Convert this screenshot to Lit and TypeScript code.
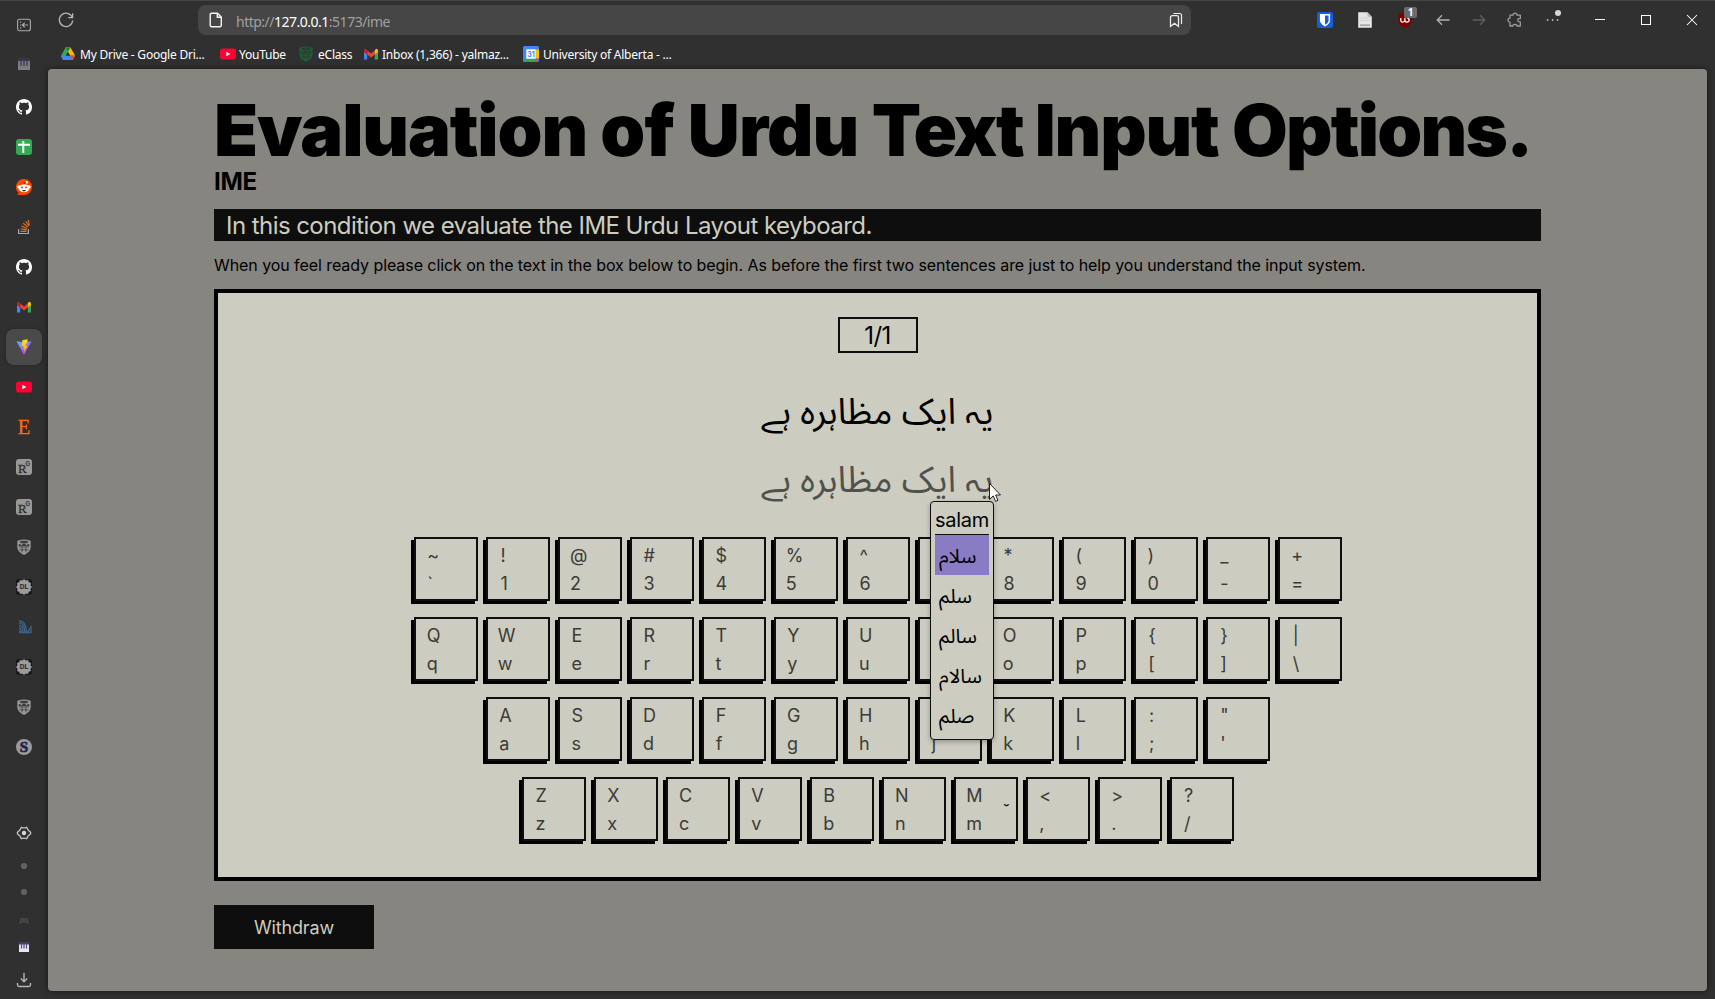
import { LitElement, html, svg, css, TemplateResult } from "lit";
import { customElement, property } from "lit/decorators.js";
import { classMap } from "lit/directives/class-map.js";

const shieldUni = (c: string, bg: string) => svg`
  <path d="M1.3 1.8Q8 -1 14.7 1.8V8.5Q14 13.500 8 16Q2 13.500 1.300 8.500Z" fill=${c}/>
  <path d="M4.500 2.200h7v1.500h-7zM3 5.300l2.500 1.200 2.500-2 2.500 2 2.500-1.200v1.400H3zM3 8h10M3.500 10.800h9M6 8v5.500M10 8v5.500" fill=${bg} stroke=${bg} stroke-width=".7"/>`;

const piano = svg`
  <rect x="3" y="3" width="10" height="10" fill="#e8e4f4"/><rect x="3" y="3" width="10" height="2.500" fill="#4a3f66"/>
  <path d="M5.500 5v4.500M8 5v4.500M10.500 5v4.500" stroke="#5d508c" stroke-width="1.300"/>`;

const gmail = svg`
  <path d="M1 5v8.500h3.200V7.600z" fill="#4285f4"/><path d="M15 5v8.500h-3.200V7.600z" fill="#34a853"/>
  <path d="M4.200 4.500L8 7.500l3.800-3v4L8 11.500l-3.800-3z" fill="#ea4335"/>
  <path d="M1 4.500Q1 2.700 2.700 2.700L4.200 4v4.500L1 6.200z" fill="#c5221f"/><path d="M15 4.500q0-1.800-1.700-1.800L11.800 4v4.500L15 6.200z" fill="#fbbc04"/>`;

const youtube = svg`<rect x="0" y="2.500" width="16" height="11" rx="2.800" fill="#ff0033"/><path d="M6.300 5.700v4.600L10.400 8z" fill="#fff"/>`;

const scholarDL = svg`
  <rect width="16" height="16" rx="3" fill="#181818"/>
  <path d="M8 0l1.800 1.500L12 1l.8 2.200L15 4l-.5 2.200L16 8l-1.500 1.800L15 12l-2.200.8L12 15l-2.200-.5L8 16l-1.800-1.500L4 15l-.8-2.200L1 12l.5-2.200L0 8l1.500-1.800L1 4l2.200-.8L4 1l2.200.5z" fill="#9c9c9c"/>
  <text x="8" y="10.300" text-anchor="middle" font-family="Inter,sans-serif" font-weight="800" font-size="6.600" fill="#333">DL</text>`;

const rg = svg`
  <rect width="16" height="16" rx="3" fill="#989898"/>
  <text x="2" y="14" font-family="Liberation Serif,serif" font-size="13" fill="#2d2d2d" stroke="#2d2d2d" stroke-width=".3">R</text>
  <text x="9.300" y="7" font-family="Inter,sans-serif" font-size="6.500" font-weight="600" fill="#333">G</text>`;

const icons: Record<string, TemplateResult<2>> = {
  panel: svg`<rect x="1.600" y="2.200" width="12.800" height="11.600" rx="2" fill="none" stroke="#aaa" stroke-width="1.100"/><path d="M4.600 4.500v1.200M4.600 7.400v1.200M4.600 10.300v1.200M12 8H6.500M8.700 5.700L6.400 8l2.300 2.300" fill="none" stroke="#aaa" stroke-width="1.200"/>`,
  pianoDim: svg`<g transform="translate(-1.600 -1.600) scale(1.200)" opacity=".42">${piano}</g>`,
  piano,
  github: svg`<path fill="#fff" d="M8 0C3.58 0 0 3.58 0 8c0 3.54 2.29 6.53 5.47 7.59.4.07.55-.17.55-.38 0-.19-.01-.82-.01-1.49-2.01.37-2.53-.49-2.69-.94-.09-.23-.48-.94-.82-1.13-.28-.15-.68-.52-.01-.53.63-.01 1.08.58 1.23.82.72 1.21 1.87.87 2.33.66.07-.52.28-.87.51-1.07-1.78-.2-3.64-.89-3.64-3.95 0-.87.31-1.59.82-2.15-.08-.2-.36-1.02.08-2.12 0 0 .67-.21 2.2.82.64-.18 1.32-.27 2-.27s1.36.09 2 .27c1.53-1.04 2.2-.82 2.2-.82.44 1.1.16 1.92.08 2.12.51.56.82 1.27.82 2.15 0 3.07-1.87 3.75-3.65 3.95.29.25.54.73.54 1.48 0 1.07-.01 1.93-.01 2.2 0 .21.15.46.55.38A8.01 8.01 0 0 0 16 8c0-4.42-3.58-8-8-8z"/>`,
  sheets: svg`<rect width="16" height="16" rx="3" fill="#34a853"/><path d="M2 5.700h12M7.300 2v12" stroke="#fff" stroke-width="1.900"/>`,
  reddit: svg`<path d="M8 0a8 8 0 1 1 0 16H1.200l1.500-2A8 8 0 0 1 8 0z" fill="#ff4500"/><ellipse cx="8" cy="9.200" rx="5.300" ry="4" fill="#fff"/><circle cx="2.900" cy="7.800" r="1.600" fill="#fff"/><circle cx="13.100" cy="7.800" r="1.600" fill="#fff"/><circle cx="10.600" cy="3.300" r="1.300" fill="#fff"/><path d="M8 5.500q0-2 2-2.200" fill="none" stroke="#222" stroke-width=".7"/><circle cx="6" cy="8.500" r="1.100" fill="#ff4500"/><circle cx="10" cy="8.500" r="1.100" fill="#ff4500"/><path d="M6 11h4q-.8 1.400-2 1.400T6 11z" fill="#222"/>`,
  stack: svg`<path d="M2.600 10v4.500h9.800V10" fill="none" stroke="#a8a8a8" stroke-width="1.200"/><path d="M4.500 12.300h6M4.700 9.700l5.900 1.200M5.500 6.900l5.400 2.500M7.200 4.300l4.600 3.800M9.700 2.200l3.300 4.900M12.300 1l.9 5" stroke="#e8701f" stroke-width="1.150"/>`,
  gmail,
  vite: svg`<defs><linearGradient id="va" x1="0" y1="0" x2=".6" y2="1"><stop offset="0" stop-color="#54c3fa"/><stop offset="1" stop-color="#bd34fe"/></linearGradient><linearGradient id="vb" x1="0" y1="0" x2="0" y2="1"><stop offset="0" stop-color="#ffdd35"/><stop offset="1" stop-color="#ffa800"/></linearGradient></defs><path d="M.6 2.300L8 16l7.500-13.700L8 3.600z" fill="url(#va)"/><path d="M11.500.2L6.300 1.200 5.900 7.500l2-.4-.6 3 1.300-.4-1 4.300 3.900-7.300-2.100.4.9-2.900 1.200-.2z" fill="url(#vb)"/>`,
  youtube,
  etsy: svg`<text x="8" y="15.200" text-anchor="middle" font-family="Liberation Serif,serif" font-size="20.500" fill="#f56d13" stroke="#f56d13" stroke-width=".3">E</text>`,
  rg,
  shield: shieldUni("#999", "#333"),
  waves: svg`<path d="M3 1.800q7 0 7.500 11.700M3 4q5.500 0 5.800 9.500M3 6.500q3.800.3 4.300 7M3 9q2 .5 2.800 4.500M3 11.500l1.300 2M10 11l1.500 2.500 3.500-5.500v5.500H3" fill="none" stroke="#3c6288" stroke-width="1.300"/>`,
  dl: scholarDL,
  sLogo: svg`<circle cx="8" cy="8" r="8" fill="#9b9b9b"/><text x="8" y="13.300" text-anchor="middle" font-family="Liberation Serif,serif" font-weight="700" font-size="15" fill="#1e2553" stroke="#1e2553" stroke-width=".7">S</text>`,
  gear: svg`<path d="M5.300 2.300Q8 3.600 10.700 2.300L12 4.900 14.600 7.200V8.800L12 11.100 10.700 13.700Q8 12.400 5.300 13.700L4 11.100 1.400 8.800V7.200L4 4.900z" fill="none" stroke="#c4c4c4" stroke-width="1.300" stroke-linejoin="round"/><circle cx="8" cy="8" r="2.200" fill="#d8d8d8"/>`,
  dot: svg`<circle cx="8" cy="8" r="3.100" fill="#616161"/>`,
  pad: svg`<path d="M4.500 5h7l1.300 5.500-1.500.8L10 9.500H6L4.700 11.300 3.200 10.500z" fill="#484848"/><path d="M5.500 6.500v2M10 6.200v2.400" stroke="#333"/>`,
  download: svg`<path d="M8 1v8.500M4.800 6.500L8 9.700l3.200-3.200M1.500 11v1.800q0 1.700 1.700 1.700h9.600q1.700 0 1.700-1.700V11" fill="none" stroke="#b4b4b4" stroke-width="1.400"/>`,
  drive: svg`<path d="M5.600 1.500h4.800L5.700 9.700 3.200 14 .8 9.900z" fill="#34a853"/><path d="M5.600 1.500h4.800l4.800 8.300h-4.900z" fill="#fbbc04"/><path d="M5.600 1.500h4.800L8 5.700z" fill="#188038"/><path d="M3.300 9.800h12L12.900 14H3.200L.8 9.900z" fill="#4285f4"/><path d="M10.300 9.800h5L12.900 14z" fill="#ea4335"/>`,
  eclass: shieldUni("#1d5c37", "#303a33"),
  calendar: svg`<rect width="16" height="16" rx="1.500" fill="#4285f4"/><path d="M12.500 3.500H16v9h-3.500z" fill="#fbbc04"/><path d="M0 12.700h12.500V16H1.500Q0 16 0 14.500z" fill="#34a853"/><path d="M12.500 12.700H16L12.500 16z" fill="#ea4335"/><rect x="3.300" y="3.300" width="9.400" height="9.400" fill="#fff"/><text x="7.900" y="10.600" text-anchor="middle" font-family="Inter,sans-serif" font-weight="700" font-size="7" fill="#4285f4">31</text>`,
  reload: svg`<path d="M14.200 5.300A6.700 6.700 0 1 0 14.700 8.500" fill="none" stroke="#b5b5b5" stroke-width="1.300"/><path d="M14.600 1.300v4.300h-4.300" fill="none" stroke="#b5b5b5" stroke-width="1.300"/>`,
  page: svg`<path d="M3.700 1.200h5.800l3.800 3.800v8.300q0 1.500-1.500 1.500H3.700q-1.500 0-1.500-1.500V2.700q0-1.500 1.500-1.500zM9.300 1.300v4h4" fill="none" stroke="#f4f4f4" stroke-width="1.400"/>`,
  bookmark: svg`<path d="M2.500 14.500V5.500q0-1.800 1.800-1.800h4.400q1.800 0 1.800 1.800v9l-4-3.200z" fill="none" stroke="#eee" stroke-width="1.300"/><path d="M5.500 1.500h6q2 0 2 2v8.500" fill="none" stroke="#eee" stroke-width="1.200"/>`,
  bitwarden: svg`<rect width="16" height="16" rx="1.800" fill="#175ddc"/><path d="M2.900 2h10.200v6.300q0 3.600-5.100 6.200-5.100-2.600-5.100-6.200z" fill="#fff"/><path d="M8 3.600v9.100q3.600-2 3.600-4.500V3.600z" fill="#175ddc"/>`,
  doc: svg`<path d="M1.200.3h9.300l4.300 4.500v11H1.200z" fill="#e6e6e4"/><path d="M10.500.3v4.500h4.300z" fill="#b5b5b5"/><path d="M3 6h9.500M3 8.300h9.500" stroke="#cfcfcf"/><path d="M3 13.200h10" stroke="#a8a8a8" stroke-width="1.800"/>`,
  ublock: svg`<path d="M8 0q3 2 6.800 2v6Q14.500 13.500 8 16 1.500 13.500 1.200 8V2Q5 2 8 0z" fill="#800000"/><path d="M3.800 6v2.500q0 1.600 1.900 1.600T7.900 8.500V6M7.900 8.500q0 1.600 2.100 1.600t2.100-2.100-2-2.200" fill="none" stroke="#fff" stroke-width="1.300"/>`,
  back: svg`<path d="M14.500 8H2.200M7 3.200L2.200 8 7 12.800" fill="none" stroke="#b0b0b0" stroke-width="1.300"/>`,
  forward: svg`<path d="M1.500 8h12.300M9 3.200L13.800 8 9 12.800" fill="none" stroke="#5f5f5f" stroke-width="1.300"/>`,
  puzzle: svg`<path d="M6 3.200a2 2 0 0 1 4 0h3.300v3.300q-2.500-.2-2.500 1.700t2.500 1.700V14H10q0-1.600-2-1.600T6 14H3v-3.800a2 2 0 0 1 0-4V3.200z" fill="none" stroke="#9d9d9d" stroke-width="1.300" stroke-linejoin="round"/>`,
  more: svg`<circle cx="2.600" cy="8" r=".9" fill="#bbb"/><circle cx="7.600" cy="8" r=".9" fill="#bbb"/><circle cx="12.600" cy="8" r=".9" fill="#bbb"/>`,
  min: svg`<path d="M3 7.500h10" stroke="#fff"/>`,
  max: svg`<rect x="3.500" y="3.500" width="9" height="9" fill="none" stroke="#fff"/>`,
  close: svg`<path d="M3 3l10 10M13 3L3 13" stroke="#fff" stroke-width="1.050"/>`,
};

@customElement("ui-icon")
class UiIcon extends LitElement {
  @property() name = "dot";
  static styles = css`
    :host { display: block; width: 16px; height: 16px; flex: none; }
    svg { display: block; width: 100%; height: 100%; overflow: visible; }
  `;
  render() {
    return html`<svg viewBox="0 0 16 16">${icons[this.name]}</svg>`;
  }
}

const tabs = ["github", "sheets", "reddit", "stack", "github", "gmail", "vite", "youtube", "etsy", "rg", "rg", "shield", "dl", "waves", "dl", "shield", "sLogo"];

@customElement("side-bar")
class SideBar extends LitElement {
  static styles = css`
    :host { display: flex; flex-direction: column; align-items: center; width: 48px; height: 999px; flex: none; }
    .slot { display: grid; place-items: center; width: 36px; height: 36px; margin: 2px 0; border-radius: 8px; flex: none; }
    .top { margin-top: 7px; }
    .second { margin-top: 1px; margin-bottom: 5px; }
    .active { background: #4a4a4a; box-shadow: 0 0 3px #0004; }
    .spacer { flex: 1; }
    .small { height: 26px; width: 26px; display: grid; place-items: center; }
    .gear { height: 40px; }
    .pad { padding-top: 3px; }
    .down { height: 39px; }
  `;
  render() {
    return html`
      <div class="slot top"><ui-icon name="panel"></ui-icon></div>
      <div class="slot second"><ui-icon name="pianoDim"></ui-icon></div>
      ${tabs.map((n) => html`<div class=${classMap({ slot: true, active: n === "vite" })}><ui-icon name=${n}></ui-icon></div>`)}
      <div class="spacer"></div>
      <div class="small gear"><ui-icon name="gear"></ui-icon></div>
      <div class="small"><ui-icon name="dot"></ui-icon></div>
      <div class="small"><ui-icon name="dot"></ui-icon></div>
      <div class="small pad"><ui-icon name="pad"></ui-icon></div>
      <div class="small"><ui-icon name="piano"></ui-icon></div>
      <div class="small down"><ui-icon name="download"></ui-icon></div>
    `;
  }
}

@customElement("browser-bar")
class BrowserBar extends LitElement {
  static styles = css`
    :host { display: block; height: 69px; font-family: "Noto Sans", "Open Sans", sans-serif; color: #fff; }
    .nav { display: flex; align-items: center; height: 30px; padding-top: 5px; }
    .reload { margin-left: 10px; margin-right: 124px; }
    .url { display: flex; align-items: center; width: 993px; height: 30px; box-sizing: border-box; background: #464646; border-radius: 8px; padding: 0 7px 0 10px; font-size: 14px; color: #a0a0a0; }
    .addr { flex: 1; margin-left: 12px; padding-top: 2px; letter-spacing: -0.5px; white-space: pre; }
    .addr b { font-weight: 400; color: #fff; }
    .tools { display: flex; margin-left: auto; }
    .tool { display: grid; place-items: center; width: 36px; height: 30px; position: relative; }
    .wide { width: 40px; }
    .win { width: 46px; }
    .first-win { margin-left: 4px; }
    .badge { position: absolute; right: 8px; top: 2px; width: 13px; height: 11px; border-radius: 2px; background: #6b6b6b; font: 700 10px/11px "Noto Sans", sans-serif; text-align: center; }
    .notice { position: absolute; right: 12px; top: 5px; width: 6px; height: 6px; border-radius: 50%; background: #d6d6d6; }
    .marks { display: flex; align-items: center; height: 30px; padding: 4px 0 0 12px; font-size: 12px; }
    .mark { display: flex; align-items: center; gap: 4px; white-space: nowrap; flex: none; }
    .label { padding-top: 1px; letter-spacing: -0.23px; }
    .m0 { width: 160px; } .m1 { width: 78px; } .m2 { width: 65px; } .m3 { width: 160px; }
    .m1, .m3 { gap: 3px; }
  `;
  render() {
    const marks = [["drive", "My Drive - Google Dri..."], ["youtube", "YouTube"], ["eclass", "eClass"], ["gmail", "Inbox (1,366) - yalmaz..."], ["calendar", "University of Alberta - ..."]];
    return html`
      <div class="nav">
        <ui-icon class="reload" name="reload"></ui-icon>
        <div class="url"><ui-icon name="page"></ui-icon><span class="addr">http://<b>127.0.0.1</b>:5173/ime</span><ui-icon name="bookmark"></ui-icon></div>
        <div class="tools">
          <div class="tool wide"><ui-icon name="bitwarden"></ui-icon></div>
          <div class="tool wide"><ui-icon name="doc"></ui-icon></div>
          <div class="tool wide"><ui-icon name="ublock"></ui-icon><span class="badge">1</span></div>
          <div class="tool"><ui-icon name="back"></ui-icon></div>
          <div class="tool"><ui-icon name="forward"></ui-icon></div>
          <div class="tool"><ui-icon name="puzzle"></ui-icon></div>
          <div class="tool wide"><ui-icon name="more"></ui-icon><span class="notice"></span></div>
          <div class="tool win first-win"><ui-icon name="min"></ui-icon></div>
          <div class="tool win"><ui-icon name="max"></ui-icon></div>
          <div class="tool win"><ui-icon name="close"></ui-icon></div>
        </div>
      </div>
      <div class="marks">
        ${marks.map(([i, t], n) => html`<div class="mark m${n}"><ui-icon name=${i}></ui-icon><span class="label">${t}</span></div>`)}
      </div>
    `;
  }
}

const rows: string[][] = [
  ["~`", "!1", "@2", "#3", "$4", "%5", "^6", "&7", "*8", "(9", ")0", "_-", "+="],
  ["Qq", "Ww", "Ee", "Rr", "Tt", "Yy", "Uu", "Ii", "Oo", "Pp", "{[", "}]", "|\\"],
  ["Aa", "Ss", "Dd", "Ff", "Gg", "Hh", "Jj", "Kk", "Ll", ":;", "\"'"],
  ["Zz", "Xx", "Cc", "Vv", "Bb", "Nn", "Mm", "<,", ">.", "?/"],
];

@customElement("key-board")
class KeyBoard extends LitElement {
  static styles = css`
    :host { display: flex; flex-direction: column; gap: 16px; align-items: center; }
    .row { display: flex; gap: 8px; }
    .key { display: flex; justify-content: space-around; align-items: center; box-sizing: border-box; width: 64px; height: 64px; padding-top: 2px; border: 2px solid #0e0e0e; box-shadow: -3px 3px 0 #000; background: #cdccc0; font-size: 18px; line-height: 28px; color: #3b3b37; letter-spacing: -0.15px; }
    .sym { display: flex; flex-direction: column; }
    .alt { width: 1px; height: 56px; display: flex; justify-content: center; font-weight: 800; font-size: 14px; line-height: 56px; color: #111; }
    .alt span { padding-left: 4px; }
  `;
  render() {
    return html`${rows.map((r) => html`<div class="row">${r.map((k) => html`
      <div class="key"><div class="sym"><span>${k[0]}</span><span>${k[1]}</span></div><div class="alt">${k === "Mm" ? html`<span>˘</span>` : ""}</div></div>`)}</div>`)}`;
  }
}

@customElement("ime-menu")
class ImeMenu extends LitElement {
  static styles = css`
    :host { display: block; box-sizing: border-box; width: 64px; height: 239px; padding: 4px; border: 1px solid #0e0e0e; border-radius: 4px; background: #cdccc0; box-shadow: 0 2px 5px #0004; color: #000; }
    .typed { font-size: 20px; line-height: 28px; height: 28px; border-bottom: 1px solid #0e0e0e; white-space: nowrap; letter-spacing: -0.3px; }
    .option { height: 40px; line-height: 44px; padding: 0 4px; font-family: "Noto Sans Arabic", "DejaVu Sans", sans-serif; font-size: 20px; white-space: nowrap; }
    .selected { background: #8a7cc4; }
  `;
  render() {
    const options = ["سلام", "سلم", "سالم", "سالام", "صلم"];
    return html`<div class="typed">salam</div>
      ${options.map((o, i) => html`<div class=${classMap({ option: true, selected: i === 0 })}>${o}</div>`)}`;
  }
}

@customElement("app-root")
class AppRoot extends LitElement {
  static styles = css`
    :host { display: flex; width: 1715px; height: 999px; box-sizing: border-box; background: #303030; overflow: hidden; font-family: Inter, sans-serif; color: #000; box-shadow: inset 0 1px 0 #454545; }
    .main { flex: 1; min-width: 0; display: flex; flex-direction: column; }
    .view { height: 922px; width: 1659px; box-sizing: border-box; background: #868580; border-radius: 4px; padding: 25px 166px 0; box-shadow: 0 0 6px #0008; }
    h1 { margin: 0; font-size: 72px; line-height: 72px; font-weight: 900; white-space: nowrap; letter-spacing: -1.14px; }
    .w-of { letter-spacing: -0.7px; }
    .w-urdu { letter-spacing: -0.9px; }
    .w-text { letter-spacing: -2.2px; }
    .w-options { letter-spacing: -1.75px; }
    h2 { margin: 0 0 11px; font-size: 24px; line-height: 32px; font-weight: 700; letter-spacing: -0.3px; }
    .banner { height: 32px; box-sizing: border-box; background: #0e0e0e; color: #cdccc0; font-size: 24px; line-height: 32px; padding: 1px 0 0 12px; letter-spacing: -0.555px; }
    p { margin: 12px 0; font-size: 16px; line-height: 24px; letter-spacing: -0.07px; }
    .panel { position: relative; box-sizing: border-box; height: 592px; border: 4px solid #000; background: #cdccc0; padding-top: 24px; display: flex; flex-direction: column; align-items: center; }
    .count { box-sizing: border-box; width: 80px; height: 36px; border: 2px solid #0e0e0e; font-size: 24px; line-height: 34px; text-align: center; letter-spacing: -0.5px; }
    .urdu { font-family: "Noto Sans Arabic", "DejaVu Sans", sans-serif; font-size: 36px; line-height: 40px; height: 40px; white-space: nowrap; }
    .line { margin-top: 40px; }
    .ghost { margin-top: 28px; opacity: .6; }
    key-board { margin-top: 36px; }
    ime-menu { position: absolute; left: 712px; top: 208px; }
    .cursor { position: absolute; left: 771px; top: 190px; width: 12px; height: 19px; }
    .withdraw { display: block; margin-top: 24px; width: 160px; height: 44px; border: 0; padding: 2px 0 0; background: #0e0e0e; color: #cdccc0; font: 400 18px/28px Inter, sans-serif; letter-spacing: -0.15px; }
  `;
  render() {
    return html`
      <side-bar></side-bar>
      <div class="main">
        <browser-bar></browser-bar>
        <div class="view">
          <h1>Evaluation <span class="w-of">of </span><span class="w-urdu">Urdu </span><span class="w-text">Text </span>Input <span class="w-options">Options.</span></h1>
          <h2>IME</h2>
          <div class="banner">In this condition we evaluate the IME Urdu Layout keyboard.</div>
          <p>When you feel ready please click on the text in the box below to begin. As before the first two sentences are just to help you understand the input system.</p>
          <div class="panel">
            <div class="count">1/1</div>
            <div class="urdu line" dir="rtl" lang="ur">یہ ایک مظاہرہ ہے</div>
            <div class="urdu ghost" dir="rtl" lang="ur">یہ ایک مظاہرہ ہے</div>
            <key-board></key-board>
            <ime-menu></ime-menu>
            <svg class="cursor" viewBox="0 0 12 19"><path d="M.5.5v16l3.700-3.600 2.400 5.500 2.400-1-2.400-5.400h4.900z" fill="#fff" stroke="#222"/></svg>
          </div>
          <button class="withdraw">Withdraw</button>
        </div>
      </div>
    `;
  }
}
